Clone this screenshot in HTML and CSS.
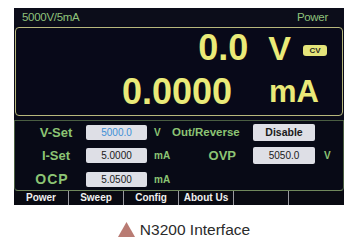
FILE: index.html
```html
<!DOCTYPE html>
<html>
<head>
<meta charset="utf-8">
<link rel="stylesheet" href="styles.css">
</head>
<body>
<div class="screen">
  <div class="header">
    <span>5000V/5mA</span>
    <span>Power</span>
  </div>
  <div class="readout">
    <div class="row row-v">
      <span class="num">0.0</span>
      <span class="unit-big unit-v">V</span>
      <span class="badge">CV</span>
    </div>
    <div class="row row-a">
      <span class="num">0.0000</span>
      <span class="unit-big unit-ma">mA</span>
    </div>
  </div>
  <div class="settings">
    <div class="lbl">V-Set</div>
    <div class="field field-blue">5000.0</div>
    <div class="unit">V</div>
    <div class="lbl2">Out/Reverse</div>
    <div class="field field-bold field-r">Disable</div>
    <div class="unit2"></div>

    <div class="lbl">I-Set</div>
    <div class="field">5.0000</div>
    <div class="unit">mA</div>
    <div class="lbl2 lbl-ovp">OVP</div>
    <div class="field field-r">5050.0</div>
    <div class="unit2">V</div>

    <div class="lbl lbl-ocp">OCP</div>
    <div class="field">5.0500</div>
    <div class="unit">mA</div>
  </div>
  <div class="tabs">
    <div class="tab">Power</div>
    <div class="tab">Sweep</div>
    <div class="tab">Config</div>
    <div class="tab">About Us</div>
    <div class="tab"></div>
    <div class="tab"></div>
  </div>
</div>
<div class="caption">
  <svg class="tri" width="17" height="15" viewBox="0 0 17 15"><polygon points="8.5,0 17,15 0,15" fill="#b97b73"/></svg>
  <span>N3200 Interface</span>
</div>
</body>
</html>
```

FILE: styles.css
```css
html, body {
  margin: 0;
  padding: 0;
  background: #ffffff;
}
body {
  width: 359px;
  height: 244px;
  overflow: hidden;
  font-family: "Liberation Sans", Arial, sans-serif;
}
.screen {
  margin: 8px 0 0 14px;
  width: 330px;
  height: 197px;
  background: #0a0b19;
  display: flex;
  flex-direction: column;
}
.header {
  height: 17px;
  line-height: 18px;
  display: flex;
  justify-content: space-between;
  padding: 0 16px 0 8px;
  color: #8fc27a;
  font-size: 11.5px;
  letter-spacing: -0.3px;
  background: #0c0d1a;
}
.readout {
  margin: 2px 1px 0 1px;
  height: 87px;
  border: 1.5px solid #b7b77c;
  border-radius: 4px;
  background: #080919;
  display: flex;
  flex-direction: column;
  padding-top: 2px;
}
.row {
  display: flex;
  align-items: center;
  justify-content: flex-end;
  height: 36px;
  color: #eaea78;
  font-weight: bold;
}
.num {
  font-size: 36px;
  line-height: 36px;
}
.row-v {
  padding-right: 15px;
}
.row-a {
  margin-top: 8px;
  padding-right: 23px;
}
.unit-big {
  font-size: 36px;
  line-height: 36px;
}
.unit-v {
  margin-left: 20px;
  font-size: 34px;
}
.unit-ma {
  margin-left: 37px;
  font-size: 31px;
}
.badge {
  margin-left: 12px;
  margin-top: 4px;
  width: 24px;
  height: 11px;
  border-radius: 3px;
  background: #e4e47a;
  color: #2a2a20;
  font-size: 8px;
  line-height: 11px;
  text-align: center;
  font-weight: bold;
}
.settings {
  margin-top: 4px;
  border: 1px solid #4a5e42;
  border-bottom-color: #70885c;
  border-radius: 0 0 4px 4px;
  display: grid;
  grid-template-columns: 71px 61px 25px 81px 62px 1fr;
  grid-template-rows: 22px 22px 22px;
  row-gap: 1.5px;
  align-items: center;
  background: #080a16;
}
.lbl {
  padding-left: 11px;
  text-align: center;
  color: #8cc474;
  font-size: 13px;
  font-weight: bold;
}
.lbl-ocp {
  font-size: 14px;
  letter-spacing: 1px;
  padding-left: 3px;
}
.lbl2 {
  text-align: right;
  color: #8cc474;
  font-size: 11.5px;
  font-weight: bold;
  padding-right: 16px;
  white-space: nowrap;
}
.lbl-ovp {
  font-size: 13px;
  padding-right: 17px;
}
.field {
  height: 15px;
  line-height: 15px;
  background: #dedfe6;
  border-radius: 2px;
  color: #1a1a1a;
  font-size: 10px;
  text-align: center;
}
.field-r {
  height: 17px;
  line-height: 17px;
}
.field-blue {
  color: #3d8fd6;
}
.field-bold {
  font-weight: bold;
  font-size: 10.5px;
}
.unit {
  padding-left: 7px;
  color: #8cc474;
  font-size: 10px;
  font-weight: bold;
}
.unit2 {
  padding-left: 9px;
  color: #8cc474;
  font-size: 10px;
  font-weight: bold;
}
.tabs {
  display: grid;
  grid-template-columns: repeat(6, 1fr);
  height: 14px;
  background: #090a12;
}
.tab {
  border-right: 1px solid #9a9aa0;
  color: #f0f0f0;
  font-size: 10px;
  font-weight: bold;
  line-height: 14px;
  text-align: center;
}
.tab:last-child {
  border-right: none;
}
.caption {
  display: flex;
  align-items: center;
  justify-content: center;
  gap: 5px;
  padding-left: 9px;
  margin-top: 16px;
  color: #2b2b2b;
  font-size: 15.5px;
}
.tri {
  display: block;
  margin-top: -1px;
}
```
